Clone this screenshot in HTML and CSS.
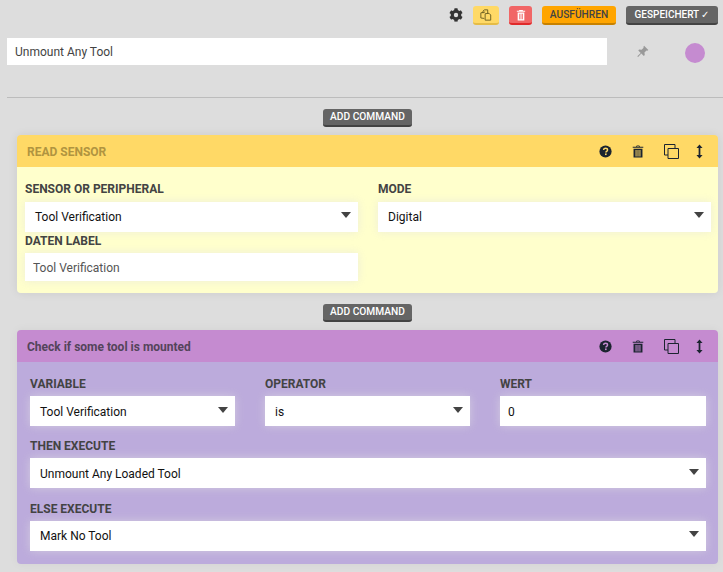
FILE: index.html
```html
<!DOCTYPE html>
<html lang="en">
<head>
    <meta charset="UTF-8">
    <meta name="viewport" content="width=device-width, initial-scale=1.0">
    <title>Unmount Any Tool</title>
    <link rel="stylesheet" href="styles.css">
</head>
<body>

    <div class="top-bar">
        <svg class="gear" viewBox="0 0 512 512" width="14" height="14"><path d="M487 316l-42-25a190 190 0 0 0 0-70l42-25c5-3 7-8 5-14-11-35-30-67-54-93-4-4-10-5-15-2l-42 25a188 188 0 0 0-61-35V28c0-6-4-11-9-12-37-8-74-8-110 0-5 1-9 6-9 12v49c-22 8-43 20-61 35L89 87c-5-3-11-2-15 2-24 26-43 58-54 93-2 6 0 11 5 14l42 25a190 190 0 0 0 0 70l-42 25c-5 3-7 8-5 14 11 35 30 67 54 93 4 4 10 5 15 2l42-25c18 15 39 27 61 35v49c0 6 4 11 9 12 37 8 74 8 110 0 5-1 9-6 9-12v-49c22-8 43-20 61-35l42 25c5 3 11 2 15-2 24-26 43-58 54-93 2-6 0-11-5-14zM256 336a80 80 0 1 1 0-160 80 80 0 0 1 0 160z"/></svg>
        <button class="btn btn-yellow btn-icon">
            <svg viewBox="0 0 14 14" width="12" height="12" fill="none" stroke="#6b5f22" stroke-width="1.100"><path d="M3.500 5V2.500L5 1h4v4.500"/><path d="M6 3.500 1 4.500v6l4 .5"/><path d="M6 5.500 10.500 5l2 2v6H6z"/></svg>
        </button>
        <button class="btn btn-red btn-icon btn-narrow">
            <svg viewBox="0 0 12 14" width="10" height="12" fill="#fff"><path d="M4 1h4l.6 1H11v1.200H1V2h2.400zM2 4h8v9.500H2zM4 5.500v6.500h.9V5.500zM5.600 5.500v6.500h.9V5.500zM7.200 5.500v6.500h.9V5.500z" fill-rule="evenodd"/></svg>
        </button>
        <button class="btn btn-orange">AUSFÜHREN</button>
        <button class="btn btn-gray btn-saved">GESPEICHERT ✓</button>
    </div>

    <div class="name-row">
        <input class="name-input" type="text" value="Unmount Any Tool">
        <svg class="pin" viewBox="0 0 16 16" width="13" height="13" fill="#999"><path d="M10 .8 15.200 6l-1.300 1.100-1-.4-2.500 2.500.4 3.100-1.200 1.200-3-3-4 4.200-1-1 4.200-4-3-3L3.800 5.500l3.100.4 2.500-2.500-.4-1z"/></svg>
        <span class="color-dot"></span>
    </div>

    <hr class="divider">

    <div class="add-row"><button class="btn btn-gray btn-add">ADD COMMAND</button></div>

    <section class="card card-yellow">
        <header class="card-head">
            <h3>READ SENSOR</h3>
            <div class="card-icons">
                <svg viewBox="0 0 16 16" width="13" height="13" class="ic-help"><circle cx="8" cy="8" r="7.500" fill="#1c2430"/><path d="M5.600 6.200C5.700 4.800 6.700 4 8.100 4c1.400 0 2.400.8 2.400 2 0 1.800-2 1.700-2 3.200" fill="none" stroke="#ffd966" stroke-width="1.800"/><rect x="7.400" y="10.400" width="2" height="2" fill="#ffd966"/></svg>
                <svg viewBox="0 0 14 16" width="12" height="13" class="ic-trash" fill="#1c2430"><path d="M4.500 2 5.500.5h3L9.500 2H13.500v1.500H.5V2zM5.800 1.500 5.500 2h3l-.3-.5zM1.500 4.500h11V15.500h-11zM4 6v8h1.200V6zM6.400 6v8h1.200V6zM8.800 6v8H10V6z" fill-rule="evenodd"/></svg>
                <svg viewBox="0 0 15 15" width="15" height="15" class="ic-copy" fill="none" stroke="#1c2430" stroke-width="1"><path d="M4 14.500V4.500H14.500V14.500z"/><path d="M4 11H.5V.5H11V4"/></svg>
                <svg viewBox="0 0 8 16" width="7" height="15" class="ic-size" fill="#1c2430"><path d="M4 0 7.500 4H5v8h2.500L4 16 .5 12H3V4H.5z"/></svg>
            </div>
        </header>
        <div class="card-body sensor-body">
            <div class="field">
                <label>SENSOR OR PERIPHERAL</label>
                <div class="select"><span>Tool Verification</span><i class="caret"></i></div>
            </div>
            <div class="field">
                <label>MODE</label>
                <div class="select"><span>Digital</span><i class="caret"></i></div>
            </div>
            <div class="field field-label">
                <label>DATEN LABEL</label>
                <input class="text-input muted" type="text" value="Tool Verification">
            </div>
        </div>
    </section>

    <div class="add-row add-row-2"><button class="btn btn-gray btn-add">ADD COMMAND</button></div>

    <section class="card card-purple">
        <header class="card-head">
            <h3>Check if some tool is mounted</h3>
            <div class="card-icons">
                <svg viewBox="0 0 16 16" width="13" height="13" class="ic-help"><circle cx="8" cy="8" r="7.500" fill="#1c2430"/><path d="M5.600 6.200C5.700 4.800 6.700 4 8.100 4c1.400 0 2.400.8 2.400 2 0 1.800-2 1.700-2 3.200" fill="none" stroke="#c58bd0" stroke-width="1.800"/><rect x="7.400" y="10.400" width="2" height="2" fill="#c58bd0"/></svg>
                <svg viewBox="0 0 14 16" width="12" height="13" class="ic-trash" fill="#1c2430"><path d="M4.500 2 5.500.5h3L9.500 2H13.500v1.500H.5V2zM5.800 1.500 5.500 2h3l-.3-.5zM1.500 4.500h11V15.500h-11zM4 6v8h1.200V6zM6.400 6v8h1.200V6zM8.800 6v8H10V6z" fill-rule="evenodd"/></svg>
                <svg viewBox="0 0 15 15" width="15" height="15" class="ic-copy" fill="none" stroke="#1c2430" stroke-width="1"><path d="M4 14.500V4.500H14.500V14.500z"/><path d="M4 11H.5V.5H11V4"/></svg>
                <svg viewBox="0 0 8 16" width="7" height="15" class="ic-size" fill="#1c2430"><path d="M4 0 7.500 4H5v8h2.500L4 16 .5 12H3V4H.5z"/></svg>
            </div>
        </header>
        <div class="card-body logic-body">
            <div class="logic-row">
                <div class="field">
                    <label>VARIABLE</label>
                    <div class="select select-low"><span>Tool Verification</span><i class="caret"></i></div>
                </div>
                <div class="field">
                    <label>OPERATOR</label>
                    <div class="select select-low"><span>is</span><i class="caret"></i></div>
                </div>
                <div class="field">
                    <label>WERT</label>
                    <input class="text-input select-low" type="text" value="0">
                </div>
            </div>
            <div class="field">
                <label>THEN EXECUTE</label>
                <div class="select select-low"><span>Unmount Any Loaded Tool</span><i class="caret"></i></div>
            </div>
            <div class="field">
                <label>ELSE EXECUTE</label>
                <div class="select"><span>Mark No Tool</span><i class="caret"></i></div>
            </div>
        </div>
    </section>

</body>
</html>
```

FILE: styles.css
```css
* {
    margin: 0;
    padding: 0;
    box-sizing: border-box;
    font-family: 'Roboto', sans-serif;
}

html, body {
    height: 572px;
    overflow: hidden;
}

body {
    background: #dddddd;
    color: #434343;
    padding: 6px 5px 0 7px;
}

.top-bar {
    display: flex;
    justify-content: flex-end;
    align-items: flex-start;
    height: 18px;
}

.gear {
    margin-top: 2px;
    fill: #333;
}

.btn {
    height: 19px;
    border: none;
    border-radius: 3px;
    font-size: 10.2px;
    font-weight: 500;
    cursor: pointer;
    white-space: nowrap;
    display: flex;
    align-items: center;
    justify-content: center;
    margin-left: 10px;
}

.btn-icon {
    width: 26px;
}

.btn-narrow {
    width: 23px;
}

.btn-yellow {
    background: #ffd966;
    border-bottom: 2px solid #e5bc47;
}

.btn-red {
    background: #f16666;
    border-bottom: 2px solid #e02a2a;
}

.btn-orange {
    width: 74px;
    background: #ffa500;
    color: #434343;
    border-bottom: 2px solid #c78100;
}

.btn-gray {
    width: 92px;
    background: #656565;
    color: #fff;
    border-bottom: 2px solid #434343;
}

.btn-saved {
    font-size: 10px;
}

.name-row {
    display: flex;
    align-items: center;
    margin-top: 14px;
    height: 27px;
}

.name-input {
    width: 600px;
    height: 27px;
    border: none;
    background: #fff;
    padding: 0 8px;
    font-size: 12px;
    color: #434343;
    outline: none;
}

.pin {
    margin-left: 29px;
}

.color-dot {
    width: 20px;
    height: 20px;
    border-radius: 50%;
    background: #c58bd0;
    margin-left: 36px;
    margin-top: 2px;
}

.divider {
    border: none;
    border-top: 1px solid #bcbcbc;
    margin: 32px -5px 0 0;
}

.add-row {
    display: flex;
    justify-content: center;
    margin: 11px 0 8px;
    padding-left: 10px;
}

.btn-add {
    width: 89px;
    height: 18px;
    margin-left: 0;
    padding-bottom: 1px;
}

.card {
    margin-left: 10px;
    width: 701px;
    border-radius: 4px;
    overflow: hidden;
    box-shadow: 0 0 10px rgba(0, 0, 0, .08);
}

.card-head {
    height: 32px;
    padding: 1px 15px 0 10px;
    display: flex;
    align-items: center;
    justify-content: space-between;
}

.card-head h3 {
    font-size: 12px;
    font-weight: 700;
}

.card-icons {
    display: flex;
    align-items: center;
}

.ic-trash,
.ic-copy {
    margin-left: 20px;
}

.ic-size {
    margin-left: 17px;
}

.card-yellow .card-head {
    background: #ffd966;
}

.card-yellow h3 {
    color: #b09440;
}

.card-yellow .card-body {
    background: #ffffcc;
}

.card-purple {
    box-shadow: 0 0 10px rgba(0, 0, 0, .05);
}

.card-purple .card-head {
    background: #c58bd0;
}

.card-purple h3 {
    color: #53445a;
}

.card-purple .card-body {
    background: #bcabdc;
}

.field label {
    display: block;
    font-size: 12px;
    font-weight: 700;
    line-height: 14px;
    margin-bottom: 6px;
    color: #434343;
}

.select,
.text-input {
    height: 30px;
    width: 100%;
    background: #fff;
    box-shadow: 0 0 10px rgba(225, 225, 225, .6);
}

.select {
    display: flex;
    align-items: center;
    justify-content: space-between;
    padding: 0 7px 0 10px;
    font-size: 12px;
    color: #111;
}

.caret {
    width: 0;
    height: 0;
    margin-top: -4px;
    border-left: 5.500px solid transparent;
    border-right: 5.500px solid transparent;
    border-top: 6px solid #434343;
}

.text-input {
    border: none;
    outline: none;
    padding: 0 8px;
    font-size: 12px;
    color: #111;
}

.select-low {
    padding-top: 1px;
}

.muted {
    color: #555;
    height: 28px;
    padding-top: 1px;
}

.sensor-body {
    height: 126px;
    padding: 15px 7px 0 8px;
    display: grid;
    grid-template-columns: 333px 333px;
    column-gap: 20px;
    align-content: start;
}

.field-label {
    grid-column: 1;
    margin-top: 2px;
}

.field-label label {
    margin-bottom: 5px;
}

.logic-body {
    height: 202px;
    padding: 15px 12px 0 13px;
}

.logic-row {
    display: grid;
    grid-template-columns: 205px 205px 206px;
    column-gap: 30px;
    margin-bottom: 13px;
}

.logic-body > .field {
    margin-bottom: 14px;
}

.logic-body .field label {
    margin-bottom: 5px;
}
```
